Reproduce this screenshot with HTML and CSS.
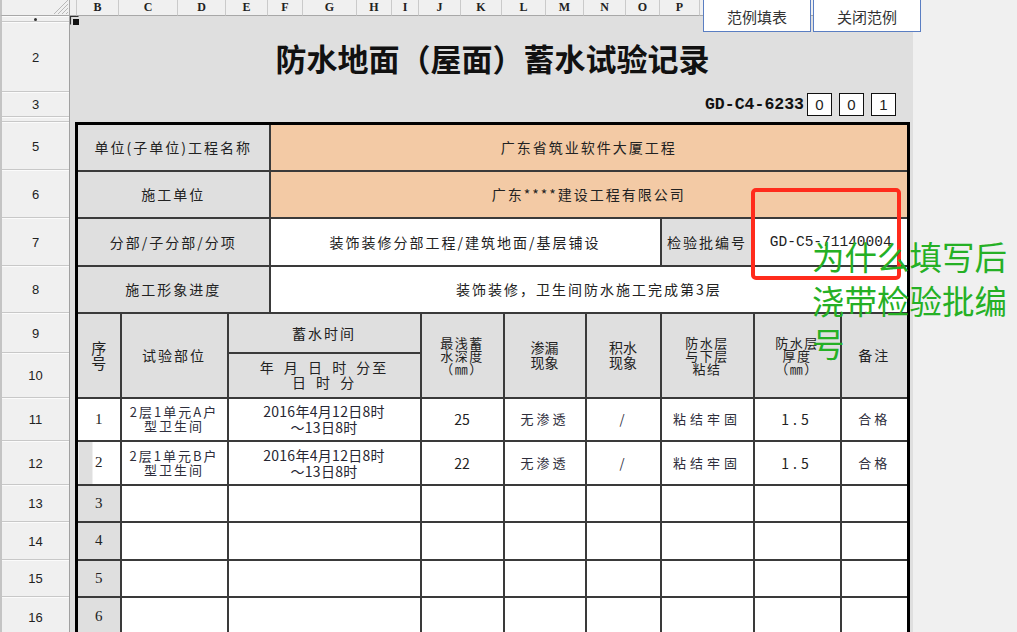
FILE: index.html
```html
<!DOCTYPE html>
<html lang="zh-CN">
<head>
<meta charset="utf-8">
<title>防水地面（屋面）蓄水试验记录</title>
<link rel="stylesheet" href="styles.css">
</head>
<body>
<div class="colhead">
  <div class="corner">
    <svg class="hatch" width="16" height="16" viewBox="0 0 16 16"><path d="M15 1L1 15M15 5L5 15M15 9L9 15M15 13L13 15" stroke="#b8b8b8" stroke-width="1" fill="none"/></svg>
  </div>
  <div class="col wA"></div>
  <div class="col wB">B</div>
  <div class="col wC">C</div>
  <div class="col wD">D</div>
  <div class="col wE">E</div>
  <div class="col wF">F</div>
  <div class="col wG">G</div>
  <div class="col wH">H</div>
  <div class="col wI">I</div>
  <div class="col wJ">J</div>
  <div class="col wK">K</div>
  <div class="col wL">L</div>
  <div class="col wM">M</div>
  <div class="col wN">N</div>
  <div class="col wO">O</div>
  <div class="col wP">P</div>
  <div class="col wQ"></div>
  <div class="colrest"></div>
</div>
<div class="main">
  <div class="rowhead">
    <div class="rh h6"><span class="dot"></span></div>
    <div class="rh h70">2</div>
    <div class="rh h25">3</div>
    <div class="rh h5"></div>
    <div class="rh h48">5</div>
    <div class="rh h48">6</div>
    <div class="rh h48">7</div>
    <div class="rh h47">8</div>
    <div class="rh h40">9</div>
    <div class="rh h45">10</div>
    <div class="rh h43">11</div>
    <div class="rh h44">12</div>
    <div class="rh h37">13</div>
    <div class="rh h38">14</div>
    <div class="rh h37">15</div>
    <div class="rh h40">16</div>
  </div>
  <div class="sheet">
    <div class="r1"></div>
    <div class="r2"><h1 class="title">防水地面（屋面）蓄水试验记录</h1></div>
    <div class="r3">
      <span class="code">GD-C4-6233</span>
      <span class="box">0</span>
      <span class="box">0</span>
      <span class="box">1</span>
    </div>
    <div class="r4"></div>
    <table class="form">
      <colgroup>
        <col class="k1"><col class="k2"><col class="k3"><col class="k4"><col class="k5">
        <col class="k6"><col class="k7"><col class="k8"><col class="k9"><col class="k10">
      </colgroup>
      <tr class="t47"><td colspan="3" class="gray lbl">单位(子单位)工程名称</td><td colspan="7" class="peach lbl">广东省筑业软件大厦工程</td></tr>
      <tr class="t47"><td colspan="3" class="gray lbl">施工单位</td><td colspan="7" class="peach lbl">广东****建设工程有限公司</td></tr>
      <tr class="t48"><td colspan="3" class="gray lbl">分部/子分部/分项</td><td colspan="4" class="lbl">装饰装修分部工程/建筑地面/基层铺设</td><td class="gray lbl">检验批编号</td><td colspan="2" class="mono">GD-C5-71140004</td></tr>
      <tr class="t47"><td colspan="3" class="gray lbl">施工形象进度</td><td colspan="7" class="lbl">装饰装修，卫生间防水施工完成第3层</td></tr>
      <tr class="t40">
        <td rowspan="2" class="gray vert">序<br>号</td>
        <td rowspan="2" class="gray lbl">试验部位</td>
        <td colspan="2" class="gray lbl">蓄水时间</td>
        <td rowspan="2" class="gray tight">最浅蓄<br>水深度<br>（㎜）</td>
        <td rowspan="2" class="gray two">渗漏<br>现象</td>
        <td rowspan="2" class="gray two">积水<br>现象</td>
        <td rowspan="2" class="gray tight">防水层<br>与下层<br>粘结</td>
        <td rowspan="2" class="gray tight">防水层<br>厚度<br>（㎜）</td>
        <td rowspan="2" class="gray lbl">备注</td>
      </tr>
      <tr class="t45"><td colspan="2" class="gray time">年 月 日 时 分至<br>日 时 分</td></tr>
      <tr class="t43">
        <td class="num">1</td>
        <td class="hand">2层1单元A户<br>型卫生间</td>
        <td colspan="2" class="date">2016年4月12日8时<br>～13日8时</td>
        <td class="val">25</td>
        <td class="hand wide">无渗透</td>
        <td class="hand">/</td>
        <td class="hand wider">粘结牢固</td>
        <td class="val spaced">1.5</td>
        <td class="hand wide">合格</td>
      </tr>
      <tr class="t44">
        <td class="num partial">2</td>
        <td class="hand">2层1单元B户<br>型卫生间</td>
        <td colspan="2" class="date">2016年4月12日8时<br>～13日8时</td>
        <td class="val">22</td>
        <td class="hand wide">无渗透</td>
        <td class="hand">/</td>
        <td class="hand wider">粘结牢固</td>
        <td class="val spaced">1.5</td>
        <td class="hand wide">合格</td>
      </tr>
      <tr class="t37"><td class="num gray">3</td><td></td><td colspan="2"></td><td></td><td></td><td></td><td></td><td></td><td></td></tr>
      <tr class="t38"><td class="num gray">4</td><td></td><td colspan="2"></td><td></td><td></td><td></td><td></td><td></td><td></td></tr>
      <tr class="t37"><td class="num gray">5</td><td></td><td colspan="2"></td><td></td><td></td><td></td><td></td><td></td><td></td></tr>
      <tr class="t40"><td class="num gray">6</td><td></td><td colspan="2"></td><td></td><td></td><td></td><td></td><td></td><td></td></tr>
    </table>
  </div>
  <div class="rest"></div>
</div>

<svg class="cursor" width="9" height="9" viewBox="0 0 9 9"><path d="M0.5 8.5V0.5H8.5" stroke="#333" stroke-width="1.2" fill="none"/><rect x="3" y="3" width="6" height="6" fill="#111"/></svg>

<div class="btns">
  <button class="btn">范例填表</button>
  <button class="btn">关闭范例</button>
</div>

<div class="note-box"></div>
<div class="note-text">为什么填写后浇带检验批编号</div>
</body>
</html>
```

FILE: styles.css
```css
* { box-sizing: border-box; margin: 0; padding: 0; }
html, body { width: 1017px; height: 632px; overflow: hidden; }
body {
  background: #f0f0f0;
  font-family: "Noto Sans CJK SC", "Liberation Sans", sans-serif;
  color: #222;
  position: relative;
}

/* column header */
.colhead { display: flex; height: 16px; background: #f0f0f0; }
.corner {
  width: 70px; height: 16px;
  display: flex; justify-content: flex-end; align-items: flex-end;
  border-left: 2px solid #c4c4c4;
  border-right: 1px solid #a8a8a8;
  border-bottom: 1px solid #a8a8a8;
}
.hatch { display: block; }
.col {
  height: 16px;
  border-right: 1px solid #cacaca;
  border-bottom: 1px solid #a8a8a8;
  font: bold 12px "Liberation Serif", serif;
  line-height: 15px;
  text-align: center;
  color: #222;
}
.colrest { flex: 1; }
.wA { width: 7px; } .wB { width: 42px; } .wC { width: 59px; } .wD { width: 48px; }
.wE { width: 42px; } .wF { width: 35px; } .wG { width: 54px; } .wH { width: 35px; }
.wI { width: 27px; } .wJ { width: 42px; } .wK { width: 41px; } .wL { width: 44px; }
.wM { width: 38px; } .wN { width: 42px; } .wO { width: 34px; } .wP { width: 40px; }
.wQ { width: 213px; }

/* main */
.main { display: flex; height: 616px; }
.rowhead {
  width: 70px; flex: none;
  display: flex; flex-direction: column;
  background: #f0f0f0;
  border-left: 2px solid #c4c4c4;
  border-right: 1px solid #a0a0a0;
}
.rh {
  flex: none;
  display: flex; align-items: center; justify-content: center;
  border-bottom: 1px solid #c8c8c8;
  border-top: 1px solid #fbfbfb;
  font: 13px "Liberation Sans", sans-serif;
  color: #222;
}
.dot { width: 3px; height: 3px; background: #333; border-radius: 50%; }
.h5 { height: 5px; } .h6 { height: 6px; } .h25 { height: 25px; } .h37 { height: 37px; }
.h38 { height: 38px; } .h40 { height: 40px; } .h43 { height: 43px; } .h44 { height: 44px; }
.h45 { height: 45px; } .h47 { height: 47px; } .h48 { height: 48px; } .h70 { height: 70px; }

.sheet { width: 843px; flex: none; background: #dfdfdf; padding-left: 5px; }
.rest { flex: 1; background: #f0f0f0; }

.r1 { height: 6px; }
.r2 { height: 70px; display: flex; align-items: center; justify-content: center; padding-right: 3px; }
.title { font: 700 31px "Noto Sans CJK SC", sans-serif; color: #111; letter-spacing: 0; }
.r3 { height: 25px; display: flex; align-items: center; justify-content: flex-end; padding-right: 17px; gap: 7px; }
.code { font: bold 16.5px "Liberation Mono", monospace; color: #111; margin-right: -4px; }
.box {
  width: 25px; height: 23px;
  background: #fff; border: 1px solid #111;
  display: flex; align-items: center; justify-content: center;
  font: 15px "Liberation Sans", sans-serif; color: #222;
}
.r4 { height: 5px; }

/* form table */
.form {
  border-collapse: collapse;
  table-layout: fixed;
  width: 832px;
  border: 3px solid #000;
  background: #fff;
}
.k1 { width: 44px; } .k2 { width: 107px; } .k3 { width: 42px; } .k4 { width: 151px; }
.k5 { width: 83px; } .k6 { width: 82px; } .k7 { width: 75px; } .k8 { width: 93px; }
.k9 { width: 87px; } .k10 { width: 68px; }
.form td {
  border: 2px solid #3a3a3a;
  text-align: center;
  vertical-align: middle;
  padding: 0;
  font-size: 14px;
  color: #222;
  overflow: hidden;
  white-space: nowrap;
}
.t37 { height: 37px; } .t38 { height: 38px; } .t40 { height: 40px; } .t43 { height: 43px; }
.t44 { height: 44px; } .t45 { height: 45px; } .t47 { height: 47px; } .t48 { height: 48px; }

.gray { background: #dfdfdf; }
.peach { background: #f3caa5; }
.partial { background: linear-gradient(to right, #dfdfdf 14px, #fff 14px); }
.lbl { letter-spacing: 2px; }
.mono { font-family: "Liberation Mono", monospace; font-size: 14.5px !important; color: #111; }
.vert { font-size: 15px !important; line-height: 15px; }
.tight { font-size: 13px !important; line-height: 13px; letter-spacing: 1.5px; }
.two { line-height: 15px; }
.time { line-height: 15px; letter-spacing: 2px; word-spacing: 3px; }
.num { font-family: "Liberation Serif", serif; font-size: 15px !important; }
.hand { font-size: 13px !important; line-height: 14px; letter-spacing: 2px; color: #2e2e3c !important; }
.wide { letter-spacing: 3px; }
.wider { letter-spacing: 4px; }
.date { line-height: 16px; letter-spacing: 0.3px; color: #262632 !important; }
.val { font-size: 14px; }
.spaced { letter-spacing: 4px; }

/* overlays */
.cursor { position: absolute; left: 70px; top: 16px; }
.btns { position: absolute; left: 703px; top: -1px; display: flex; gap: 2px; }
.btn {
  width: 108px; height: 33px;
  background: #fff;
  border: 1px solid #5a7ec2;
  font: 15px "Noto Sans CJK SC", sans-serif;
  color: #333;
  padding-top: 1px;
}
.note-box {
  position: absolute; left: 751px; top: 188px;
  width: 150px; height: 92px;
  border: 4px solid #ff2b1c;
  border-radius: 5px;
}
.note-text {
  position: absolute; left: 812px; top: 234px;
  width: 200px;
  font: 32.5px "Noto Sans CJK SC", sans-serif;
  line-height: 43.5px;
  color: #25b025;
}
```
